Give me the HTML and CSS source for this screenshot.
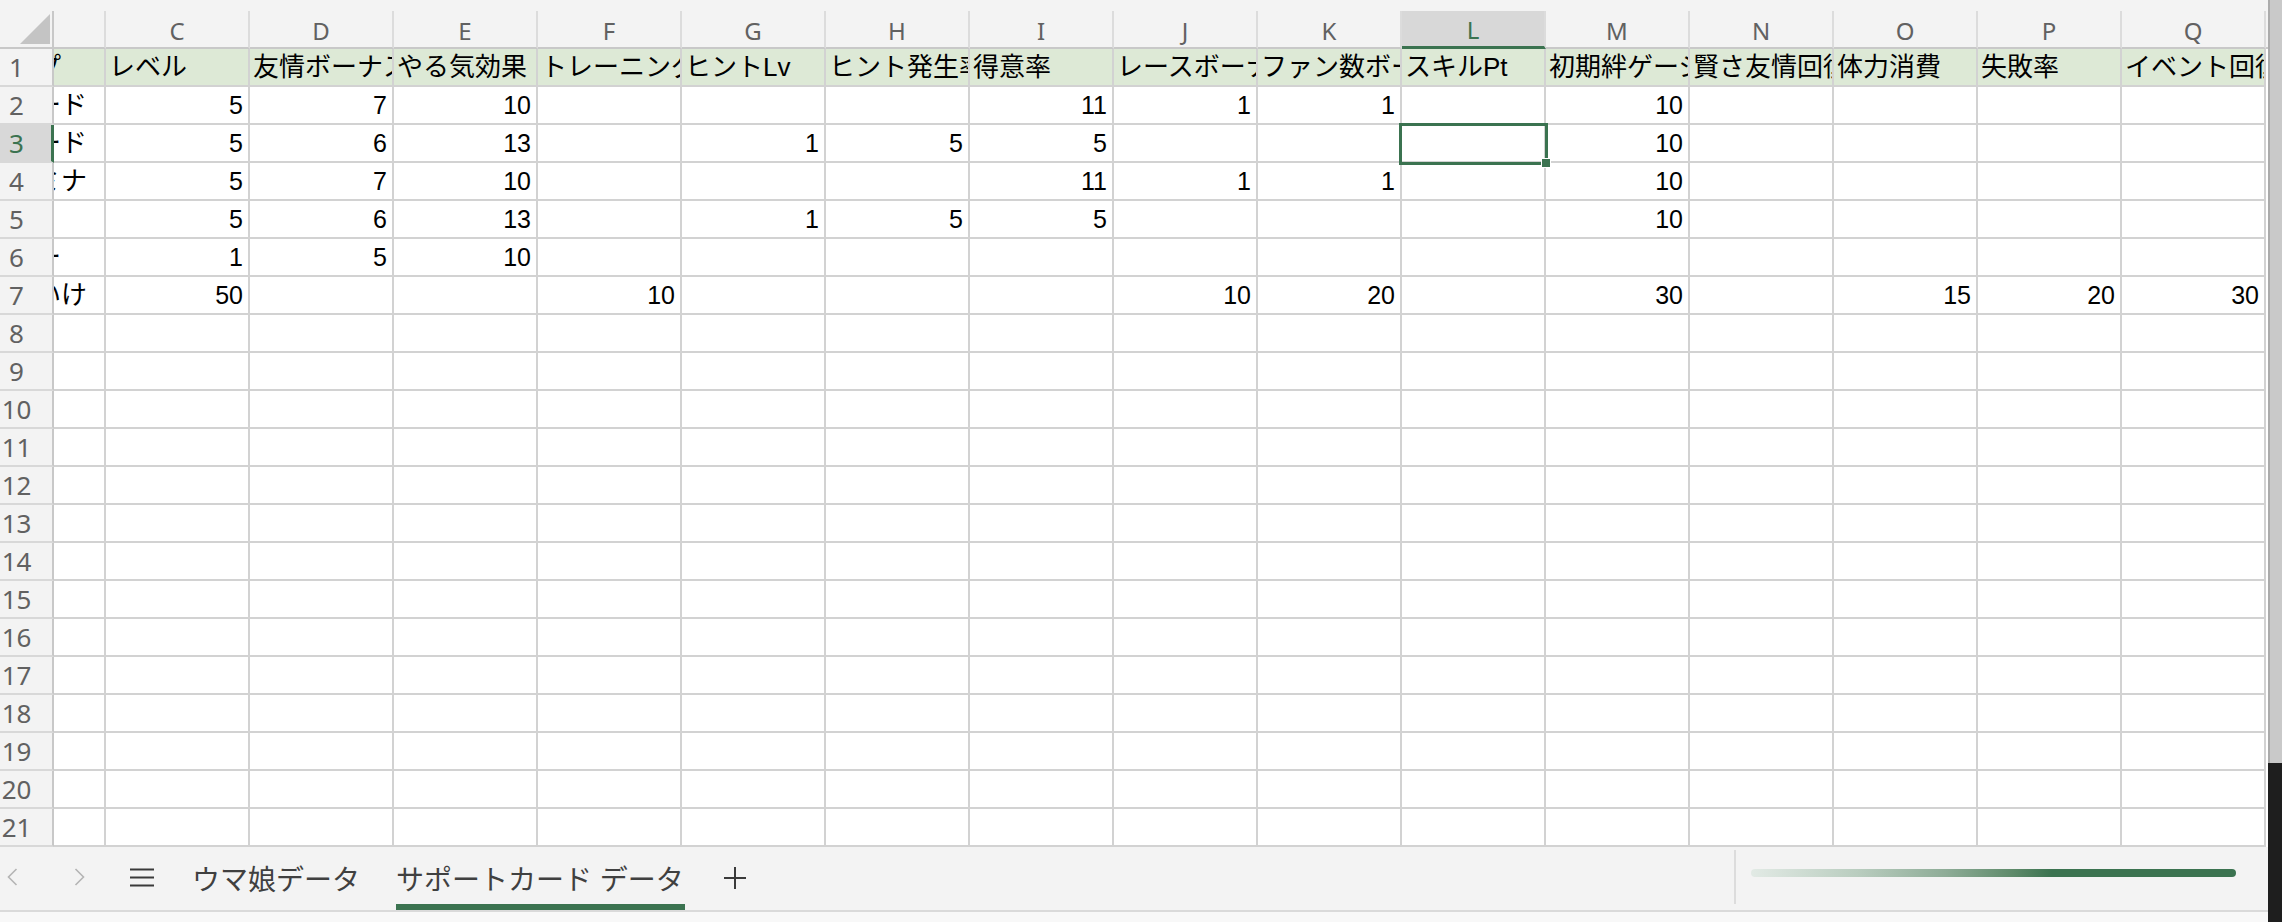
FILE: index.html
```html
<!DOCTYPE html>
<html lang="ja">
<head>
<meta charset="utf-8">
<title>サポートカード データ</title>
<link rel="stylesheet" href="styles.css">
</head>
<body>
<div class="app">
  <div class="main">
    <div class="topgap"></div>
    <div class="row hrow">
      <div class="corner"><span class="tri"></span></div>
      <div class="ch"></div>
      <div class="ch">C</div><div class="ch">D</div><div class="ch">E</div><div class="ch">F</div><div class="ch">G</div><div class="ch">H</div><div class="ch">I</div><div class="ch">J</div><div class="ch">K</div><div class="ch sel">L</div><div class="ch">M</div><div class="ch">N</div><div class="ch">O</div><div class="ch">P</div><div class="ch">Q</div>
      <div class="che"></div>
    </div>

    <div class="row r1">
      <div class="rh">1</div><div class="c b">タイプ</div>
      <div class="c">レベル</div><div class="c">友情ボーナス</div><div class="c">やる気効果</div><div class="c">トレーニング効果</div><div class="c">ヒントLv</div><div class="c">ヒント発生率</div><div class="c">得意率</div><div class="c">レースボーナス</div><div class="c">ファン数ボーナス</div><div class="c">スキルPt</div><div class="c">初期絆ゲージ</div><div class="c">賢さ友情回復量</div><div class="c">体力消費</div><div class="c">失敗率</div><div class="c">イベント回復量</div>
      <div class="e"></div>
    </div>

    <div class="row">
      <div class="rh">2</div><div class="c b">スピード</div>
      <div class="c n">5</div><div class="c n">7</div><div class="c n">10</div><div class="c"></div><div class="c"></div><div class="c"></div><div class="c n">11</div><div class="c n">1</div><div class="c n">1</div><div class="c"></div><div class="c n">10</div><div class="c"></div><div class="c"></div><div class="c"></div><div class="c"></div>
      <div class="e"></div>
    </div>

    <div class="row">
      <div class="rh rsel">3</div><div class="c b">スピード</div>
      <div class="c n">5</div><div class="c n">6</div><div class="c n">13</div><div class="c"></div><div class="c n">1</div><div class="c n">5</div><div class="c n">5</div><div class="c"></div><div class="c"></div><div class="c active"><span class="selbox"><span class="handle"></span></span></div><div class="c n">10</div><div class="c"></div><div class="c"></div><div class="c"></div><div class="c"></div>
      <div class="e"></div>
    </div>

    <div class="row">
      <div class="rh">4</div><div class="c b">スタミナ</div>
      <div class="c n">5</div><div class="c n">7</div><div class="c n">10</div><div class="c"></div><div class="c"></div><div class="c"></div><div class="c n">11</div><div class="c n">1</div><div class="c n">1</div><div class="c"></div><div class="c n">10</div><div class="c"></div><div class="c"></div><div class="c"></div><div class="c"></div>
      <div class="e"></div>
    </div>

    <div class="row">
      <div class="rh">5</div><div class="c b">根性</div>
      <div class="c n">5</div><div class="c n">6</div><div class="c n">13</div><div class="c"></div><div class="c n">1</div><div class="c n">5</div><div class="c n">5</div><div class="c"></div><div class="c"></div><div class="c"></div><div class="c n">10</div><div class="c"></div><div class="c"></div><div class="c"></div><div class="c"></div>
      <div class="e"></div>
    </div>

    <div class="row">
      <div class="rh">6</div><div class="c b">パワー</div>
      <div class="c n">1</div><div class="c n">5</div><div class="c n">10</div><div class="c"></div><div class="c"></div><div class="c"></div><div class="c"></div><div class="c"></div><div class="c"></div><div class="c"></div><div class="c"></div><div class="c"></div><div class="c"></div><div class="c"></div><div class="c"></div>
      <div class="e"></div>
    </div>

    <div class="row">
      <div class="rh">7</div><div class="c b">全部いけ</div>
      <div class="c n">50</div><div class="c"></div><div class="c"></div><div class="c n">10</div><div class="c"></div><div class="c"></div><div class="c"></div><div class="c n">10</div><div class="c n">20</div><div class="c"></div><div class="c n">30</div><div class="c"></div><div class="c n">15</div><div class="c n">20</div><div class="c n">30</div>
      <div class="e"></div>
    </div>

    <div class="row"><div class="rh">8</div><div class="c b"></div><div class="c"></div><div class="c"></div><div class="c"></div><div class="c"></div><div class="c"></div><div class="c"></div><div class="c"></div><div class="c"></div><div class="c"></div><div class="c"></div><div class="c"></div><div class="c"></div><div class="c"></div><div class="c"></div><div class="c"></div><div class="e"></div></div>
    <div class="row"><div class="rh">9</div><div class="c b"></div><div class="c"></div><div class="c"></div><div class="c"></div><div class="c"></div><div class="c"></div><div class="c"></div><div class="c"></div><div class="c"></div><div class="c"></div><div class="c"></div><div class="c"></div><div class="c"></div><div class="c"></div><div class="c"></div><div class="c"></div><div class="e"></div></div>
    <div class="row"><div class="rh">10</div><div class="c b"></div><div class="c"></div><div class="c"></div><div class="c"></div><div class="c"></div><div class="c"></div><div class="c"></div><div class="c"></div><div class="c"></div><div class="c"></div><div class="c"></div><div class="c"></div><div class="c"></div><div class="c"></div><div class="c"></div><div class="c"></div><div class="e"></div></div>
    <div class="row"><div class="rh">11</div><div class="c b"></div><div class="c"></div><div class="c"></div><div class="c"></div><div class="c"></div><div class="c"></div><div class="c"></div><div class="c"></div><div class="c"></div><div class="c"></div><div class="c"></div><div class="c"></div><div class="c"></div><div class="c"></div><div class="c"></div><div class="c"></div><div class="e"></div></div>
    <div class="row"><div class="rh">12</div><div class="c b"></div><div class="c"></div><div class="c"></div><div class="c"></div><div class="c"></div><div class="c"></div><div class="c"></div><div class="c"></div><div class="c"></div><div class="c"></div><div class="c"></div><div class="c"></div><div class="c"></div><div class="c"></div><div class="c"></div><div class="c"></div><div class="e"></div></div>
    <div class="row"><div class="rh">13</div><div class="c b"></div><div class="c"></div><div class="c"></div><div class="c"></div><div class="c"></div><div class="c"></div><div class="c"></div><div class="c"></div><div class="c"></div><div class="c"></div><div class="c"></div><div class="c"></div><div class="c"></div><div class="c"></div><div class="c"></div><div class="c"></div><div class="e"></div></div>
    <div class="row"><div class="rh">14</div><div class="c b"></div><div class="c"></div><div class="c"></div><div class="c"></div><div class="c"></div><div class="c"></div><div class="c"></div><div class="c"></div><div class="c"></div><div class="c"></div><div class="c"></div><div class="c"></div><div class="c"></div><div class="c"></div><div class="c"></div><div class="c"></div><div class="e"></div></div>
    <div class="row"><div class="rh">15</div><div class="c b"></div><div class="c"></div><div class="c"></div><div class="c"></div><div class="c"></div><div class="c"></div><div class="c"></div><div class="c"></div><div class="c"></div><div class="c"></div><div class="c"></div><div class="c"></div><div class="c"></div><div class="c"></div><div class="c"></div><div class="c"></div><div class="e"></div></div>
    <div class="row"><div class="rh">16</div><div class="c b"></div><div class="c"></div><div class="c"></div><div class="c"></div><div class="c"></div><div class="c"></div><div class="c"></div><div class="c"></div><div class="c"></div><div class="c"></div><div class="c"></div><div class="c"></div><div class="c"></div><div class="c"></div><div class="c"></div><div class="c"></div><div class="e"></div></div>
    <div class="row"><div class="rh">17</div><div class="c b"></div><div class="c"></div><div class="c"></div><div class="c"></div><div class="c"></div><div class="c"></div><div class="c"></div><div class="c"></div><div class="c"></div><div class="c"></div><div class="c"></div><div class="c"></div><div class="c"></div><div class="c"></div><div class="c"></div><div class="c"></div><div class="e"></div></div>
    <div class="row"><div class="rh">18</div><div class="c b"></div><div class="c"></div><div class="c"></div><div class="c"></div><div class="c"></div><div class="c"></div><div class="c"></div><div class="c"></div><div class="c"></div><div class="c"></div><div class="c"></div><div class="c"></div><div class="c"></div><div class="c"></div><div class="c"></div><div class="c"></div><div class="e"></div></div>
    <div class="row"><div class="rh">19</div><div class="c b"></div><div class="c"></div><div class="c"></div><div class="c"></div><div class="c"></div><div class="c"></div><div class="c"></div><div class="c"></div><div class="c"></div><div class="c"></div><div class="c"></div><div class="c"></div><div class="c"></div><div class="c"></div><div class="c"></div><div class="c"></div><div class="e"></div></div>
    <div class="row"><div class="rh">20</div><div class="c b"></div><div class="c"></div><div class="c"></div><div class="c"></div><div class="c"></div><div class="c"></div><div class="c"></div><div class="c"></div><div class="c"></div><div class="c"></div><div class="c"></div><div class="c"></div><div class="c"></div><div class="c"></div><div class="c"></div><div class="c"></div><div class="e"></div></div>
    <div class="row"><div class="rh">21</div><div class="c b"></div><div class="c"></div><div class="c"></div><div class="c"></div><div class="c"></div><div class="c"></div><div class="c"></div><div class="c"></div><div class="c"></div><div class="c"></div><div class="c"></div><div class="c"></div><div class="c"></div><div class="c"></div><div class="c"></div><div class="c"></div><div class="e"></div></div>

    <div class="tabbar">
      <span class="nav prev"><svg width="11" height="18" viewBox="0 0 11 18"><polyline points="9.5,1 1.5,9 9.5,17" fill="none" stroke="#b4b4b4" stroke-width="1.6"/></svg></span>
      <span class="nav next"><svg width="11" height="18" viewBox="0 0 11 18"><polyline points="1.5,1 9.5,9 1.5,17" fill="none" stroke="#b4b4b4" stroke-width="1.6"/></svg></span>
      <span class="menu"><svg width="24" height="19" viewBox="0 0 24 19"><path d="M0 1.5H24M0 9.5H24M0 17.5H24" stroke="#3a3a3a" stroke-width="2"/></svg></span>
      <span class="tab t1">ウマ娘データ</span>
      <span class="tab t2 on">サポートカード データ</span>
      <span class="add"><svg width="22" height="22" viewBox="0 0 22 22"><path d="M11 0V22M0 11H22" stroke="#3a3a3a" stroke-width="2"/></svg></span>
      <span class="sep"></span>
      <span class="hbar"></span>
    </div>
    <div class="bottomline"></div>
  </div>
  <div class="vstrip"></div>
</div>
</body>
</html>
```

FILE: styles.css
```css
html, body {
  margin: 0;
  padding: 0;
}
body {
  width: 2282px;
  height: 922px;
  overflow: hidden;
  background: #f3f3f3;
  font-family: "Liberation Sans", "Noto Sans CJK JP", sans-serif;
}
.app {
  display: flex;
  height: 922px;
}
.main {
  width: 2268px;
  display: flex;
  flex-direction: column;
}
.vstrip {
  width: 14px;
  background: linear-gradient(to bottom, transparent 0 763px, #1e1e1e 763px),
              linear-gradient(to right, #ababab 0 2px, #c9c9c9 2px);
}
.topgap {
  height: 11px;
  background: #f3f3f3;
}
.row {
  display: grid;
  grid-template-columns: 54px 52px repeat(15, 144px) 2px;
  height: 38px;
}
.hrow {
  background: #f3f3f3;
}
.corner {
  box-sizing: border-box;
  border-right: 2px solid #c8c8c8;
  border-bottom: 2px solid #c8c8c8;
  position: relative;
}
.tri {
  position: absolute;
  right: 2px;
  bottom: 3px;
  width: 0;
  height: 0;
  border-left: 30px solid transparent;
  border-bottom: 30px solid #c4c4c4;
}
.ch {
  box-sizing: border-box;
  border-right: 2px solid #dcdcdc;
  border-bottom: 2px solid #c8c8c8;
  display: flex;
  align-items: center;
  justify-content: center;
  font-family: "Noto Sans", "Liberation Sans", sans-serif;
  font-size: 24px;
  color: #616161;
  padding-top: 2px;
}
.ch.sel {
  background: #d8d8d8;
  color: #3b7350;
  border-bottom: 3px solid #3b7350;
}
.che {
  border-bottom: 2px solid #c8c8c8;
  box-sizing: border-box;
}
.rh {
  box-sizing: border-box;
  background: #f3f3f3;
  border-right: 2px solid #c8c8c8;
  border-bottom: 2px solid #d8d8d8;
  font-family: "Noto Sans", "Liberation Sans", sans-serif;
  font-size: 26px;
  line-height: 36px;
  color: #616161;
  text-align: center;
  padding-right: 19px;
}
.rh.rsel {
  background: #d8d8d8;
  color: #3b7350;
  border-right: 3px solid #3b7350;
  padding-right: 18px;
}
.c {
  box-sizing: border-box;
  background: #ffffff;
  border-right: 2px solid #d2d2d2;
  border-bottom: 2px solid #d2d2d2;
  overflow: hidden;
  white-space: nowrap;
  font-size: 26px;
  line-height: 36px;
  padding: 0 3px;
  color: #000000;
}
.c.b {
  padding: 0;
  text-indent: -71px;
}
.c.n {
  text-align: right;
  padding-right: 5px;
  font-size: 25px;
}
.r1 .c {
  background: #dde9d6;
}
.e {
  background: #ffffff;
}
.c.active {
  overflow: visible;
  position: relative;
}
.selbox {
  position: absolute;
  left: -3px;
  top: -2px;
  right: -4px;
  bottom: -4px;
  border: 3px solid #3b7350;
  z-index: 2;
}
.handle {
  position: absolute;
  right: -6px;
  bottom: -6px;
  width: 8px;
  height: 8px;
  background: #3b7350;
  border: 1px solid #ffffff;
}
.tabbar {
  height: 63px;
  display: flex;
  align-items: center;
  background: #f3f3f3;
  font-size: 28px;
  color: #404040;
}
.nav {
  display: flex;
  width: 11px;
  margin-top: -3px;
}
.prev {
  margin-left: 7px;
}
.next {
  margin-left: 56px;
}
.menu {
  display: flex;
  margin-left: 45px;
  margin-top: -3px;
}
.tab {
  height: 63px;
  box-sizing: border-box;
  display: flex;
  align-items: center;
  white-space: nowrap;
  border-bottom: 6px solid transparent;
  padding-top: 4px;
}
.t1 {
  margin-left: 38px;
  width: 167px;
}
.t2 {
  margin-left: 37px;
  width: 289px;
}
.tab.on {
  border-bottom-color: #3b7350;
}
.add {
  display: flex;
  margin-left: 39px;
  margin-top: -2px;
}
.sep {
  margin-left: auto;
  width: 2px;
  height: 54px;
  background: #dcdcdc;
  align-self: flex-start;
  margin-top: 3px;
}
.hbar {
  margin-left: 15px;
  margin-right: 32px;
  width: 485px;
  height: 8px;
  border-radius: 4px;
  margin-top: -12px;
  background: linear-gradient(to right, #e2eae5 0%, #b9cdbf 22%, #8eac97 40%, #5e8a6a 54%, #3b7350 62%, #3b7350 100%);
}
.bottomline {
  height: 2px;
  background: #dadada;
}
.main::after {
  content: "";
  height: 10px;
  background: #f8f8f8;
}
```
